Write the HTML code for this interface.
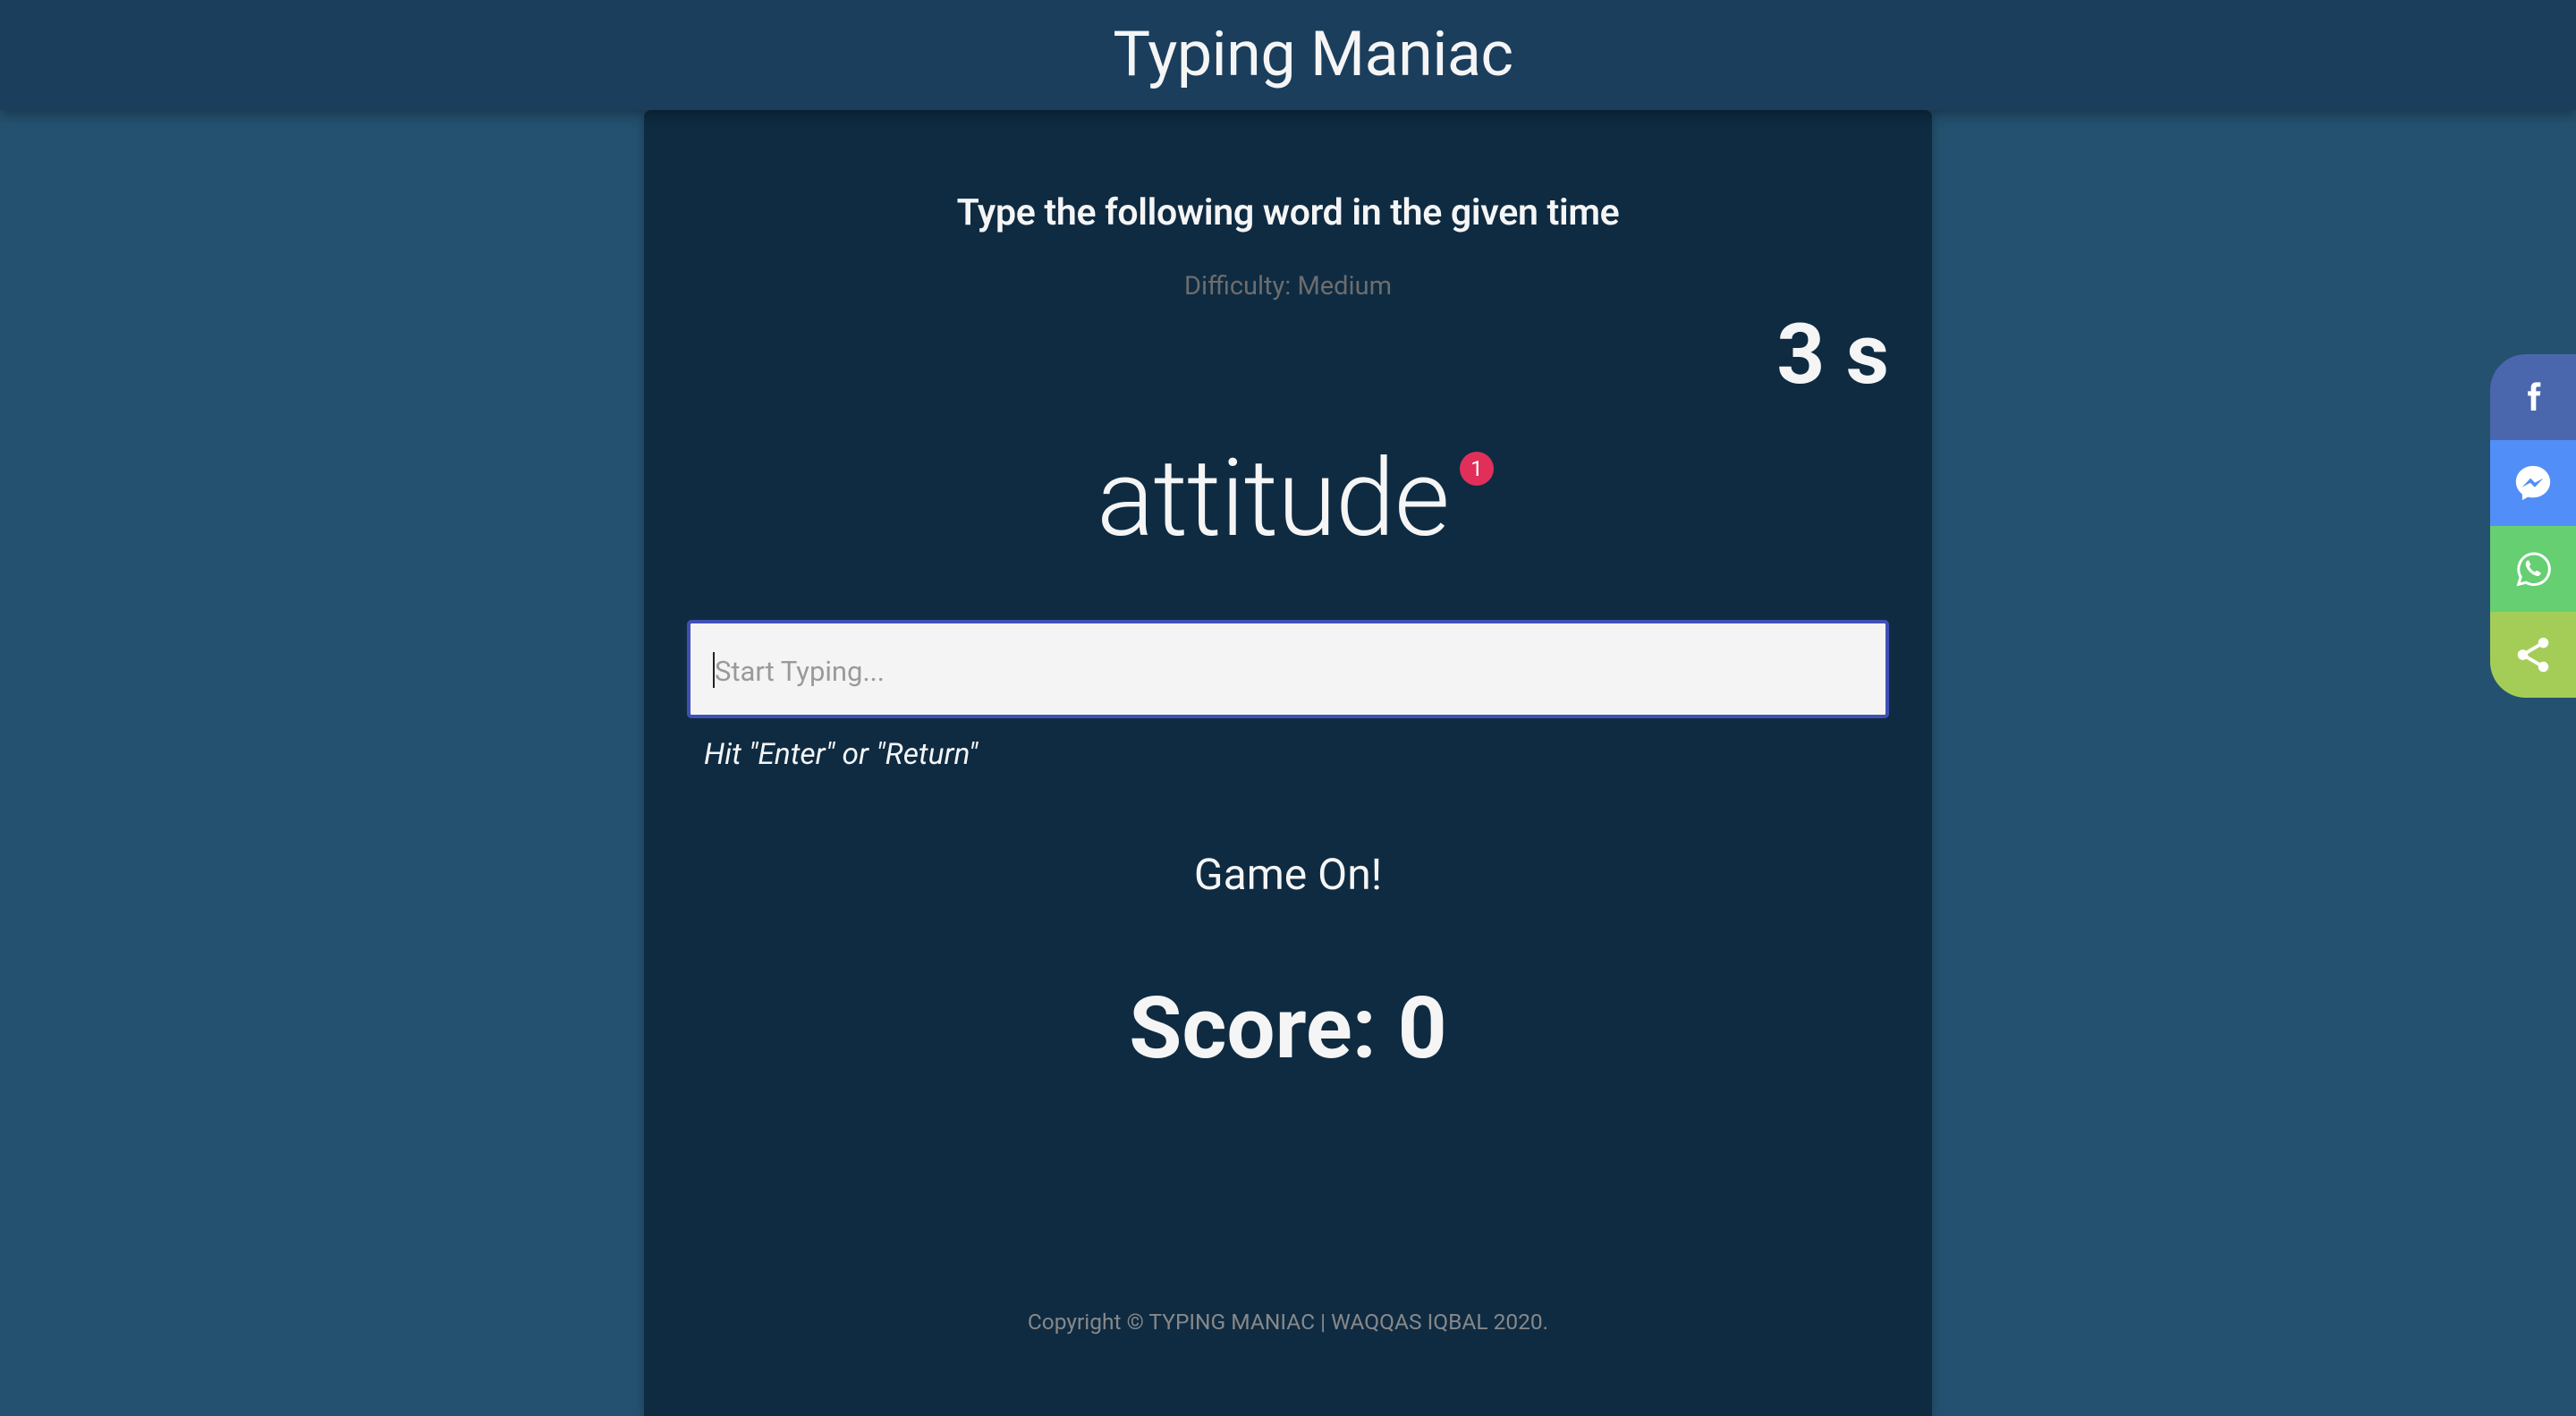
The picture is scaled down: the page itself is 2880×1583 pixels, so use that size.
<!DOCTYPE html>
<html><head><meta charset="utf-8">
<style>
html,body{margin:0;padding:0;}
body{width:2880px;height:1566px;background:#24516f;position:relative;overflow:hidden;font-family:"Roboto","Liberation Sans",sans-serif;color:#f5f5f5;}
.hdr{position:absolute;left:0;top:0;width:2880px;height:123px;background:#1b3e5d;box-shadow:0 4px 14px rgba(0,0,0,.35);z-index:2;}
.hdr h1{margin:0;position:absolute;left:28px;width:100%;top:16px;text-align:center;font-weight:400;font-size:70px;line-height:90px;letter-spacing:-0.5px;}
.card{position:absolute;left:720px;top:123px;width:1440px;height:1460px;background:#0e2b42;border-radius:8px 8px 0 0;box-shadow:0 0 12px rgba(0,0,0,.25);}
.t{position:absolute;left:0;width:100%;text-align:center;white-space:nowrap;}
.sub{font-size:41px;font-weight:600;line-height:50px;letter-spacing:-0.3px;}
.diff{top:177px;font-size:29px;color:#6d6d6d;line-height:40px;}
.time{position:absolute;right:48px;top:218px;font-size:94px;font-weight:700;line-height:110px;}
.word{top:360px;left:-17px;font-size:120px;font-weight:300;line-height:150px;letter-spacing:-1px;}
.badge{position:absolute;left:1632px;top:505px;width:38px;height:38px;border-radius:50%;background:#e0305a;color:#fff;font-size:24px;line-height:38px;text-align:center;z-index:3;}
.inp{position:absolute;left:768px;top:693px;width:1336px;height:102px;background:#f4f4f4;border:4px solid #3f51b5;border-radius:5px;}
.ph{position:absolute;left:27px;top:32px;font-size:31px;color:#9a9a9a;line-height:44px;}
.caret{position:absolute;left:25px;top:32px;width:2px;height:40px;background:#222;}
.hint{position:absolute;left:787px;top:824px;font-size:33.5px;font-style:italic;line-height:40px;}
.game{top:825px;font-size:48px;line-height:60px;}
.score{top:967px;font-size:96px;font-weight:700;line-height:120px;}
.copy{top:1339px;font-size:24.5px;color:#888;line-height:32px;}
.soc{position:absolute;left:2784px;top:396px;width:96px;height:384px;border-radius:40px 0 0 40px;overflow:hidden;}
.soc div{height:96px;display:flex;align-items:center;justify-content:center;}
</style></head><body>
<div class="hdr"><h1>Typing Maniac</h1></div>
<div class="card">
  <div class="t sub" style="top:90px">Type the following word in the given time</div>
  <div class="t diff">Difficulty: Medium</div>
  <div class="time">3 s</div>
  <div class="t word">attitude</div>
  <div class="t game">Game On!</div>
  <div class="t score">Score: 0</div>
  <div class="t copy">Copyright © TYPING MANIAC | WAQQAS IQBAL 2020.</div>
</div>
<div class="badge">1</div>
<div class="inp"><div class="caret"></div><div class="ph">Start Typing...</div></div>
<div class="hint">Hit "Enter" or "Return"</div>
<div class="soc">
  <div style="background:#4a67ad"><svg width="40" height="40" viewBox="0 0 24 24"><path fill="#fff" d="M14 8V6.2c0-.8.2-1.2 1.4-1.2H17V2h-2.6C11.6 2 10.6 3.4 10.6 5.9V8H8.5v3h2.1v10H14V11h2.6l.4-3z"/></svg></div>
  <div style="background:#518ef8"><svg width="46" height="46" viewBox="0 0 24 24"><path fill="#fff" d="M12 2C6.4 2 2 6.1 2 11.3c0 2.900 1.4 5.5 3.7 7.2V22l3.4-1.9c.9.3 1.9.4 2.9.4 5.600 0 10-4.1 10-9.2S17.6 2 12 2z"/><path fill="#518ef8" d="M5.5 14.5l5-5.3 2.6 2.6 4.9-2.6-5 5.3-2.6-2.6z"/></svg></div>
  <div style="background:#65cf72"><svg width="46" height="46" viewBox="0 0 24 24"><path fill="none" stroke="#fff" stroke-width="1.6" d="M3.5 21l1.3-4.3A9 9 0 1 1 8 19.9z"/><path fill="#fff" d="M8.6 7.2c.3-.3.7-.3.9 0l1 1.8c.2.3 0 .6-.2.9l-.5.6c.7 1.5 1.8 2.6 3.3 3.3l.6-.6c.3-.3.6-.3.9-.1l1.7 1c.3.2.3.6.1.9-.6 1-1.5 1.4-2.6 1-3-1-5.3-3.3-6.1-6.3-.2-1 .2-1.9.9-2.5z"/></svg></div>
  <div style="background:#a4cd57"><svg width="46" height="46" viewBox="0 0 24 24"><g fill="#fff"><circle cx="18" cy="5" r="3"/><circle cx="6" cy="12" r="3"/><circle cx="18" cy="19" r="3"/></g><path fill="none" stroke="#fff" stroke-width="2" d="M18 5L6 12l12 7"/></svg></div>
</div>
</body></html>
